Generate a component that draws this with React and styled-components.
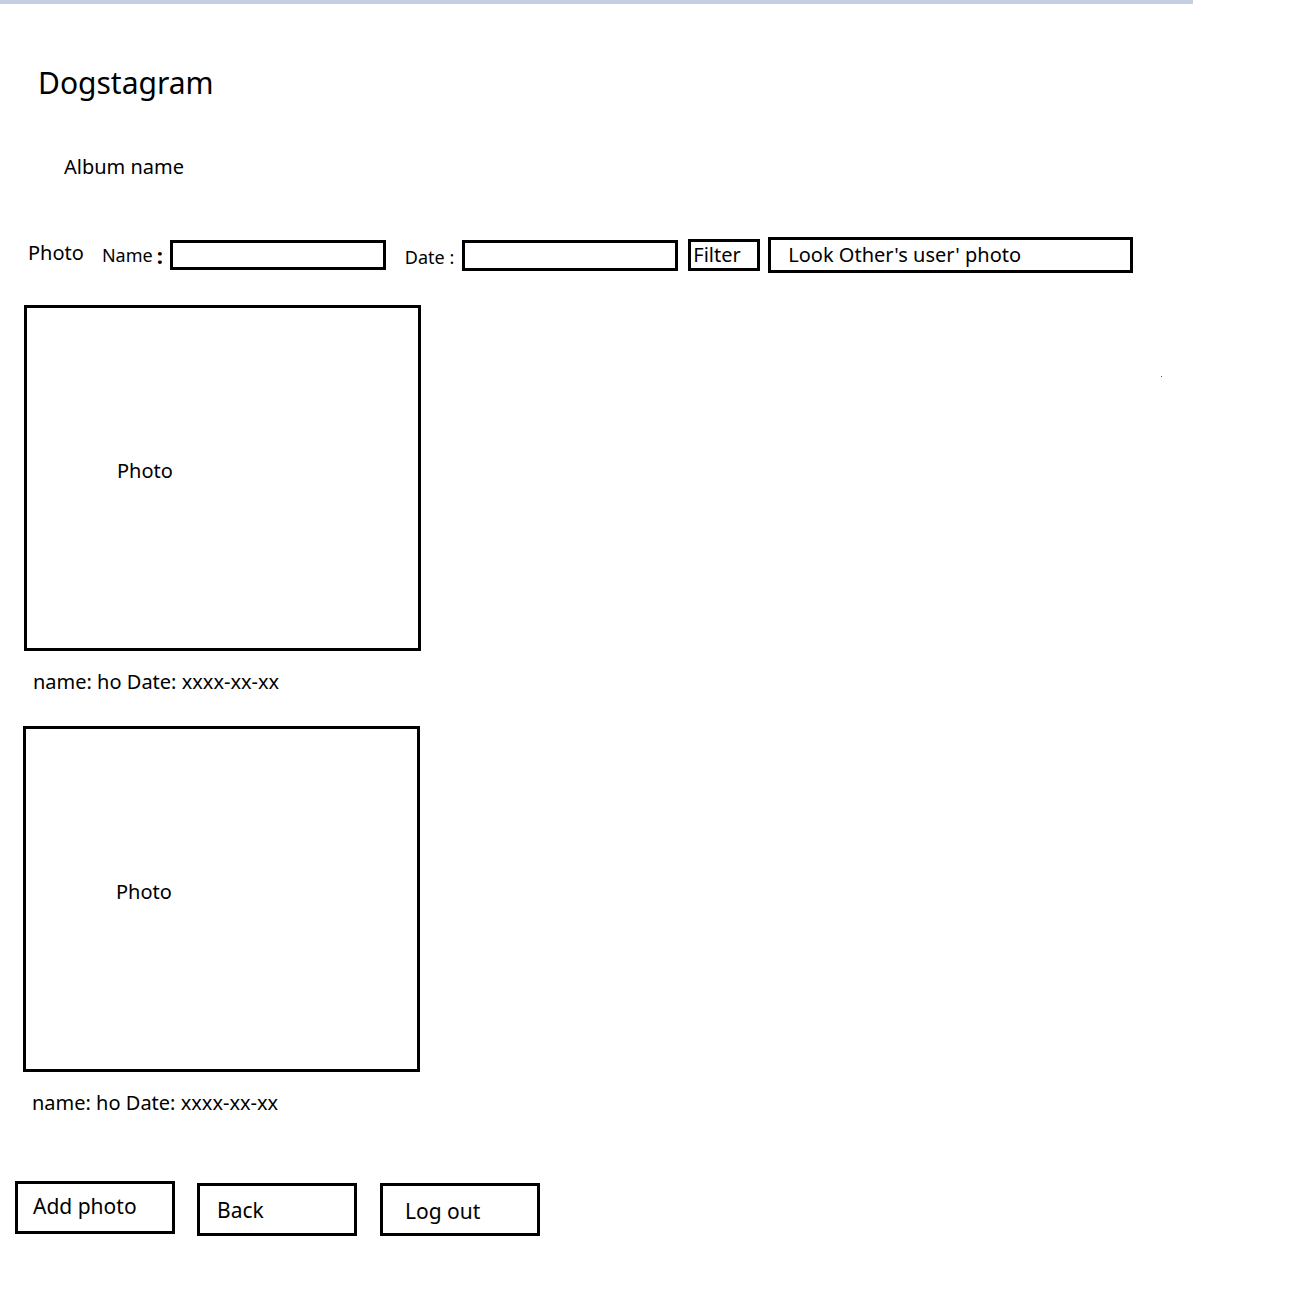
import React from "react";
import styled, { createGlobalStyle } from "styled-components";

const Global = createGlobalStyle`
  html, body { margin: 0; padding: 0; background: #fff; }
  body { font-family: "Noto Sans", "Open Sans", sans-serif; color: #000; }
  * { box-sizing: border-box; }
`;

const Page = styled.div`
  width: 1297px;
  min-height: 1301px;
  position: relative;
`;

const TopBar = styled.div`
  width: 1193px;
  height: 4px;
  background: #c4cee0;
`;

const Title = styled.h1`
  margin: 59px 0 0 38px;
  font-size: 30px;
  font-weight: 400;
  line-height: 40px;
`;

const AlbumName = styled.div`
  margin: 52px 0 0 64px;
  font-size: 20px;
  line-height: 24px;
`;

const FilterRow = styled.div`
  display: flex;
  align-items: center;
  height: 36px;
  margin-top: 58px;
  padding-left: 28px;
`;

const Label = styled.span`
  font-size: ${(p) => p.$size || 18}px;
  margin-left: ${(p) => p.$ml || 0}px;
  line-height: 24px;
  transform: translateY(${(p) => p.$dy || 0}px);
`;

const Colon = styled.span`
  font-size: 22px;
  font-weight: 700;
  margin-left: 4px;
  line-height: 24px;
`;

const Input = styled.div`
  width: ${(p) => p.$w}px;
  height: ${(p) => p.$h}px;
  border: 3px solid #000;
  margin-left: ${(p) => p.$ml}px;
`;

const BoxButton = styled.div`
  display: flex;
  align-items: center;
  width: ${(p) => p.$w}px;
  height: ${(p) => p.$h}px;
  border: 3px solid #000;
  margin-left: ${(p) => p.$ml}px;
  padding-left: ${(p) => p.$pl}px;
  font-size: 20px;
  line-height: 24px;
`;

const Card = styled.div`
  display: flex;
  align-items: center;
  width: 397px;
  height: 346px;
  border: 3px solid #000;
  margin: ${(p) => p.$mt}px 0 0 ${(p) => p.$ml}px;
  padding: 0 0 16px 90px;
  font-size: 20px;
`;

const Caption = styled.div`
  margin: 19px 0 0 ${(p) => p.$ml}px;
  font-size: 20px;
  line-height: 24px;
`;

const ButtonRow = styled.div`
  display: flex;
  align-items: flex-start;
  margin: 66px 0 0 15px;
`;

const ActionButton = styled.div`
  display: flex;
  align-items: center;
  width: 160px;
  height: 53px;
  border: 3px solid #000;
  margin: ${(p) => p.$mt || 0}px 0 0 ${(p) => p.$ml || 0}px;
  padding: ${(p) => p.$pt || 0}px 0 ${(p) => p.$pb || 0}px ${(p) => p.$pl}px;
  font-size: 21px;
  line-height: 24px;
`;

const Dot = styled.div`
  position: absolute;
  left: 1161px;
  top: 376px;
  width: 1px;
  height: 1px;
  background: #555;
`;

export default function App() {
  return (
    <Page>
      <Global />
      <TopBar />
      <Title>Dogstagram</Title>
      <AlbumName>Album name</AlbumName>
      <FilterRow>
        <Label $size={20} $dy={-2}>Photo</Label>
        <Label $size={18} $ml={18}>Name</Label>
        <Colon>:</Colon>
        <Input $w={216} $h={30} $ml={7} />
        <Label $size={18} $ml={19} $dy={2}>Date :</Label>
        <Input $w={216} $h={31} $ml={8} />
        <BoxButton $w={72} $h={32} $ml={10} $pl={2}>Filter</BoxButton>
        <BoxButton $w={365} $h={36} $ml={8} $pl={17}>Look Other's user' photo</BoxButton>
      </FilterRow>
      <Card $mt={32} $ml={24}>Photo</Card>
      <Caption $ml={33}>name: ho Date: xxxx-xx-xx</Caption>
      <Card $mt={32} $ml={23}>Photo</Card>
      <Caption $ml={32}>name: ho Date: xxxx-xx-xx</Caption>
      <ButtonRow>
        <ActionButton $pl={15} $pb={3}>Add photo</ActionButton>
        <ActionButton $ml={22} $mt={2} $pl={17}>Back</ActionButton>
        <ActionButton $ml={23} $mt={2} $pl={22} $pt={2}>Log out</ActionButton>
      </ButtonRow>
      <Dot />
    </Page>
  );
}
